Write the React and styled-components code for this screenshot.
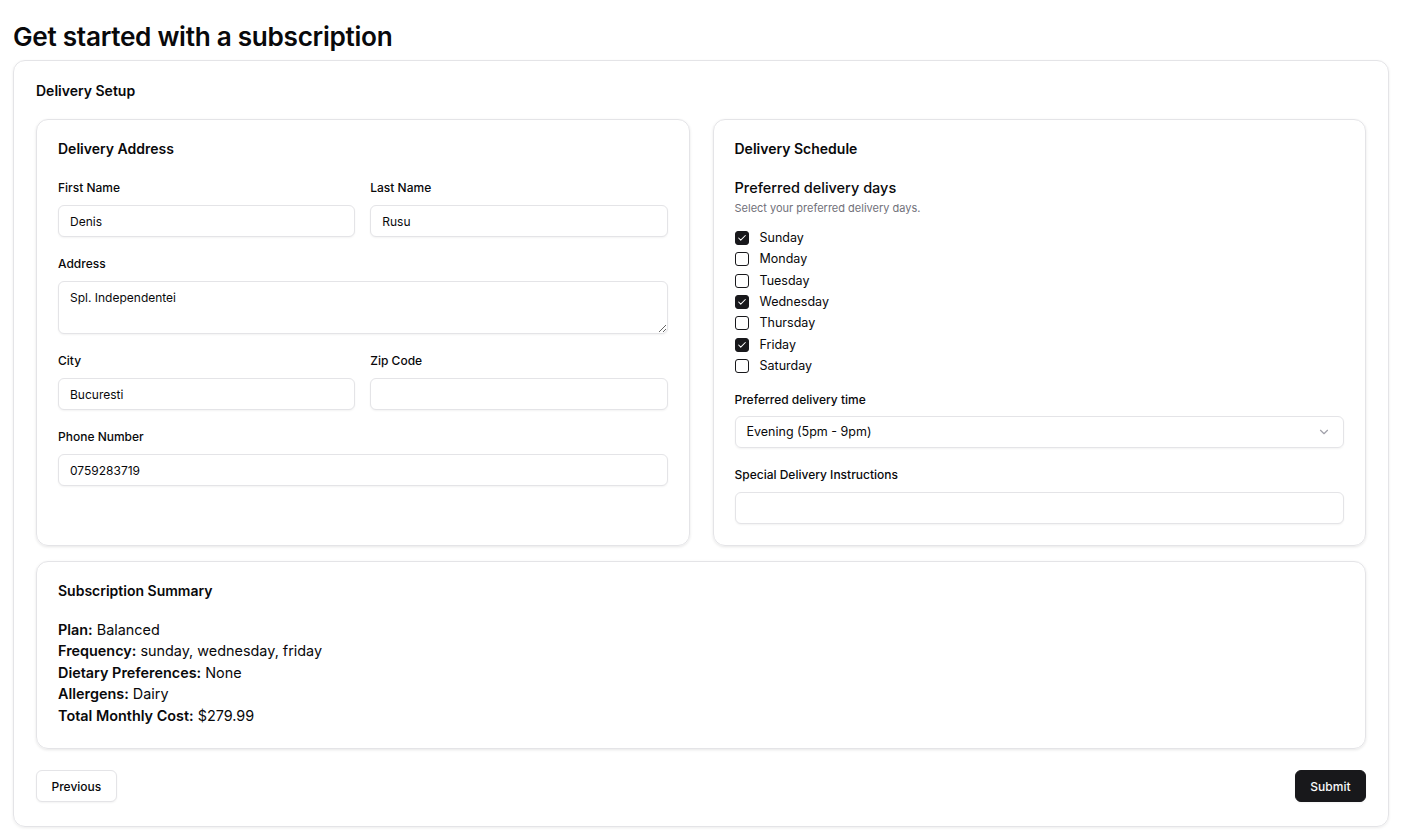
import React from "react";
import styled, { createGlobalStyle } from "styled-components";

const GlobalStyle = createGlobalStyle`
  * { box-sizing: border-box; }
  body {
    margin: 0;
    background: #fff;
    color: #09090b;
    font-family: Inter, "Noto Sans", "Liberation Sans", sans-serif;
  }
`;

const days = [
  { name: "Sunday", checked: true },
  { name: "Monday", checked: false },
  { name: "Tuesday", checked: false },
  { name: "Wednesday", checked: true },
  { name: "Thursday", checked: false },
  { name: "Friday", checked: true },
  { name: "Saturday", checked: false },
];

const summary = [
  ["Plan:", "Balanced"],
  ["Frequency:", "sunday, wednesday, friday"],
  ["Dietary Preferences:", "None"],
  ["Allergens:", "Dairy"],
  ["Total Monthly Cost:", "$279.99"],
];

function CheckIcon() {
  return (
    <svg width="10" height="10" viewBox="0 0 24 24" fill="none" stroke="#fff" strokeWidth="2.5" strokeLinecap="round" strokeLinejoin="round">
      <path d="M20 6 9 17l-5-5" />
    </svg>
  );
}

function Chevron() {
  return (
    <svg width="14" height="14" viewBox="0 0 24 24" fill="none" stroke="#a1a1aa" strokeWidth="2" strokeLinecap="round" strokeLinejoin="round">
      <path d="m6 9 6 6 6-6" />
    </svg>
  );
}

export default function App() {
  return (
    <Page>
      <GlobalStyle />
      <Title>Get started with a subscription</Title>
      <OuterCard>
        <StepTitle>Delivery Setup</StepTitle>
        <TwoCols>
          <Card>
            <CardTitle>Delivery Address</CardTitle>
            <FormGrid>
              <Field>
                <Label>First Name</Label>
                <Input defaultValue="Denis" />
              </Field>
              <Field>
                <Label>Last Name</Label>
                <Input defaultValue="Rusu" />
              </Field>
              <Field wide>
                <Label>Address</Label>
                <TextArea defaultValue="Spl. Independentei" />
              </Field>
              <Field>
                <Label>City</Label>
                <Input defaultValue="Bucuresti" />
              </Field>
              <Field>
                <Label>Zip Code</Label>
                <Input defaultValue="" />
              </Field>
              <Field wide>
                <Label>Phone Number</Label>
                <Input defaultValue="0759283719" />
              </Field>
            </FormGrid>
          </Card>
          <Card>
            <CardTitle>Delivery Schedule</CardTitle>
            <Stack>
              <div>
                <GroupTitle>Preferred delivery days</GroupTitle>
                <GroupHint>Select your preferred delivery days.</GroupHint>
                <DayList>
                  {days.map((d) => (
                    <DayRow key={d.name}>
                      <Box checked={d.checked}>{d.checked && <CheckIcon />}</Box>
                      <DayName>{d.name}</DayName>
                    </DayRow>
                  ))}
                </DayList>
              </div>
              <Field>
                <Label>Preferred delivery time</Label>
                <SelectBox>
                  <span>Evening (5pm - 9pm)</span>
                  <Chevron />
                </SelectBox>
              </Field>
              <Field>
                <Label>Special Delivery Instructions</Label>
                <Input defaultValue="" />
              </Field>
            </Stack>
          </Card>
        </TwoCols>
        <Card>
          <CardTitle>Subscription Summary</CardTitle>
          <SummaryList>
            {summary.map(([k, v]) => (
              <SummaryLine key={k}>
                <strong>{k}</strong> {v}
              </SummaryLine>
            ))}
          </SummaryList>
        </Card>
        <Footer>
          <Button>Previous</Button>
          <Button primary>Submit</Button>
        </Footer>
      </OuterCard>
    </Page>
  );
}

const Page = styled.div`
  padding: 20px 16px 10px 13px;
`;
const Title = styled.h1`
  margin: 0 0 6px 0;
  font-size: 26.2px;
  line-height: 34px;
  font-weight: 600;
  letter-spacing: -0.3px;
`;
const OuterCard = styled.div`
  border: 1px solid #e4e4e7;
  border-radius: 12px;
  box-shadow: 0 1px 3px rgba(0, 0, 0, 0.08);
  padding: 22px 22px 24px;
  display: flex;
  flex-direction: column;
  gap: 15px;
`;
const StepTitle = styled.div`
  font-size: 14px;
  font-weight: 600;
  line-height: 16px;
  margin-bottom: 5px;
`;
const TwoCols = styled.div`
  display: grid;
  grid-template-columns: 1fr 1fr;
  gap: 23px;
`;
const Card = styled.div`
  border: 1px solid #e4e4e7;
  border-radius: 12px;
  box-shadow: 0 1px 3px rgba(0, 0, 0, 0.1);
  padding: 21px;
  display: flex;
  flex-direction: column;
  gap: 25px;
`;
const CardTitle = styled.div`
  font-size: 14px;
  font-weight: 600;
  line-height: 14px;
  margin-top: 1px;
`;
const FormGrid = styled.div`
  display: grid;
  grid-template-columns: 1fr 1fr;
  column-gap: 15px;
  row-gap: 20px;
`;
const Field = styled.div`
  display: flex;
  flex-direction: column;
  gap: 10px;
  grid-column: ${(p) => (p.wide ? "1 / -1" : "auto")};
`;
const Label = styled.label`
  font-size: 12px;
  font-weight: 500;
  line-height: 14px;
`;
const Input = styled.input`
  height: 32px;
  border: 1px solid #e4e4e7;
  border-radius: 6px;
  box-shadow: 0 1px 2px rgba(0, 0, 0, 0.05);
  padding: 0 11px;
  font-family: inherit;
  font-size: 12px;
  color: #09090b;
  outline: none;
`;
const TextArea = styled.textarea`
  height: 53px;
  border: 1px solid #e4e4e7;
  border-radius: 6px;
  box-shadow: 0 1px 2px rgba(0, 0, 0, 0.05);
  padding: 8px 11px;
  font-family: inherit;
  font-size: 12px;
  color: #09090b;
  resize: vertical;
  outline: none;
`;
const Stack = styled.div`
  display: flex;
  flex-direction: column;
  gap: 20px;
`;
const GroupTitle = styled.div`
  font-size: 14.5px;
  font-weight: 500;
  line-height: 14px;
`;
const GroupHint = styled.div`
  font-size: 11px;
  color: #71717a;
  line-height: 14px;
  margin-top: 6px;
`;
const DayList = styled.div`
  margin-top: 16px;
  display: flex;
  flex-direction: column;
  gap: 7.33px;
`;
const DayRow = styled.div`
  display: flex;
  align-items: center;
  gap: 11px;
`;
const Box = styled.span`
  width: 14px;
  height: 14px;
  border-radius: 3px;
  border: 1px solid #18181b;
  background: ${(p) => (p.checked ? "#18181b" : "#fff")};
  display: flex;
  align-items: center;
  justify-content: center;
`;
const DayName = styled.span`
  font-size: 12.5px;
  line-height: 14px;
`;
const SelectBox = styled.div`
  height: 32px;
  margin-top: -1px;
  border: 1px solid #e4e4e7;
  border-radius: 6px;
  box-shadow: 0 1px 2px rgba(0, 0, 0, 0.05);
  padding: 0 12px 0 11px;
  display: flex;
  align-items: center;
  justify-content: space-between;
  font-size: 12.5px;
`;
const SummaryList = styled.div`
  display: flex;
  flex-direction: column;
  margin-top: -4px;
  padding-bottom: 1px;
`;
const SummaryLine = styled.div`
  font-size: 14.4px;
  line-height: 21.5px;
  strong { font-weight: 600; }
`;
const Footer = styled.div`
  display: flex;
  justify-content: space-between;
  margin-top: 6px;
`;
const Button = styled.button`
  height: 32px;
  padding: 0 14.5px;
  border-radius: 6px;
  font-family: inherit;
  font-size: 12px;
  font-weight: 500;
  border: 1px solid ${(p) => (p.primary ? "#18181b" : "#e4e4e7")};
  background: ${(p) => (p.primary ? "#18181b" : "#fff")};
  color: ${(p) => (p.primary ? "#fafafa" : "#09090b")};
  box-shadow: 0 1px 2px rgba(0, 0, 0, 0.05);
`;
